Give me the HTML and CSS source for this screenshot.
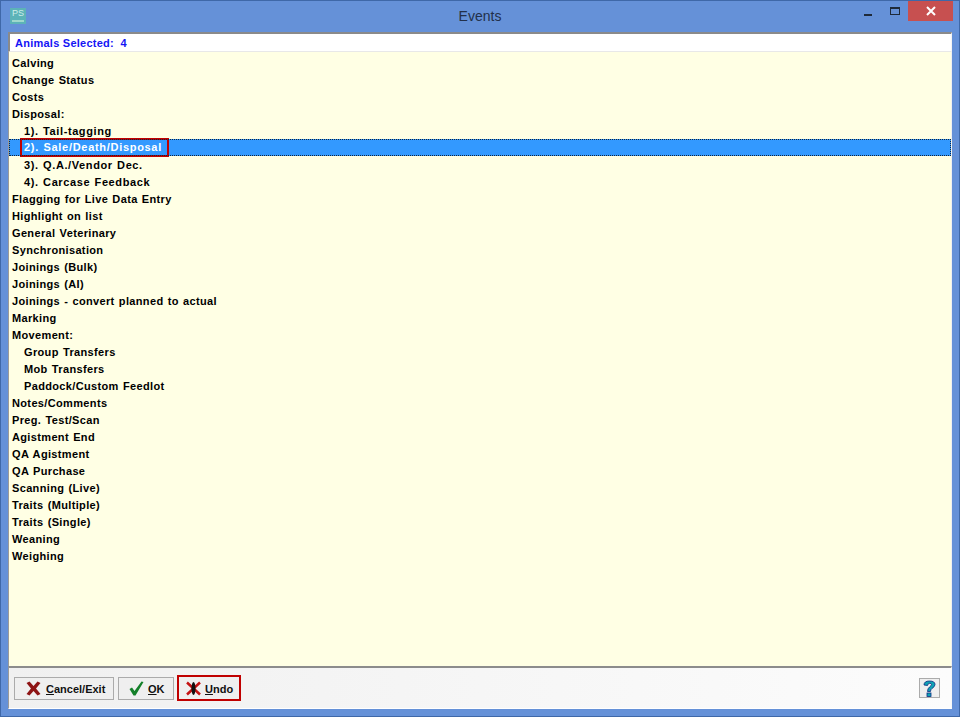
FILE: index.html
```html
<!DOCTYPE html>
<html lang="en">
<head>
<meta charset="utf-8">
<title>Events</title>
<link rel="stylesheet" href="styles.css">
</head>
<body>
<div class="window">
  <header class="titlebar">
    <div class="app-icon"><span class="app-icon-text">PS</span><span class="app-icon-bar"></span></div>
    <div class="title">Events</div>
    <div class="controls">
      <div class="ctl ctl-min"><span class="min-glyph"></span></div>
      <div class="ctl ctl-max"><span class="max-glyph"></span></div>
      <div class="ctl ctl-close">
        <svg width="10" height="10" viewBox="0 0 10 10"><path d="M1 1L9 9M9 1L1 9" stroke="#fff" stroke-width="2" fill="none"/></svg>
      </div>
    </div>
  </header>
  <main class="client">
    <div class="selected-bar"><span>Animals Selected:&nbsp; 4</span></div>
    <ul class="list">
      <li>Calving</li>
      <li>Change Status</li>
      <li>Costs</li>
      <li>Disposal:</li>
      <li class="sub num">1). Tail-tagging</li>
      <li class="sub active"><span class="hl">2). Sale/Death/Disposal</span></li>
      <li class="sub num">3). Q.A./Vendor Dec.</li>
      <li class="sub num">4). Carcase Feedback</li>
      <li>Flagging for Live Data Entry</li>
      <li>Highlight on list</li>
      <li>General Veterinary</li>
      <li>Synchronisation</li>
      <li>Joinings (Bulk)</li>
      <li>Joinings (AI)</li>
      <li>Joinings - convert planned to actual</li>
      <li>Marking</li>
      <li>Movement:</li>
      <li class="sub">Group Transfers</li>
      <li class="sub">Mob Transfers</li>
      <li class="sub">Paddock/Custom Feedlot</li>
      <li>Notes/Comments</li>
      <li>Preg. Test/Scan</li>
      <li>Agistment End</li>
      <li>QA Agistment</li>
      <li>QA Purchase</li>
      <li>Scanning (Live)</li>
      <li>Traits (Multiple)</li>
      <li>Traits (Single)</li>
      <li>Weaning</li>
      <li>Weighing</li>
    </ul>
    <footer class="footer">
      <button class="btn btn-cancel">
        <svg width="15" height="15" viewBox="0 0 15 15"><path d="M0.500 2L3.500 0.500L7.500 5L11.500 0.500L14.500 2L10 7.500L14.500 13L11.500 14.500L7.500 10L3.500 14.500L0.500 13L5 7.500Z" fill="#8e1414"/></svg>
        <span><u>C</u>ancel/Exit</span>
      </button>
      <button class="btn btn-ok">
        <svg width="15" height="15" viewBox="0 0 15 15"><path d="M0.500 8L3 6.500L5.500 10L12.500 0.500L14.500 1L6.500 14.500H4.500Z" fill="#14802a"/></svg>
        <span><u>O</u>K</span>
      </button>
      <button class="btn btn-undo">
        <svg width="15" height="15" viewBox="0 0 15 15"><path d="M1 1.500L14 13.500M14 1.500L1 13.500" stroke="#c41212" stroke-width="2.500" fill="none"/><ellipse cx="7.500" cy="7.500" rx="2" ry="6.500" fill="#111"/></svg>
        <span><u>U</u>ndo</span>
      </button>
      <div class="spacer"></div>
      <button class="btn-help">
        <svg width="13" height="17" viewBox="0 0 13 17"><path d="M1 5Q1 1 6.500 1Q12 1 12 4.500Q12 6.500 9 8.500Q7.500 9.500 7.500 11.500H4.500Q4.500 8.500 6.500 7Q8.500 5.500 8.500 4.500Q8.500 3.300 6.800 3.300Q4.800 3.300 4.500 5.500Z" fill="#0ea3b4" stroke="#0a2a80" stroke-width=".8"/><rect x="4" y="13" width="4" height="3.500" fill="#0ea3b4" stroke="#0a2a80" stroke-width=".8"/></svg>
      </button>
    </footer>
  </main>
</div>
</body>
</html>
```
FILE: styles.css
```css
* { box-sizing: border-box; }
html, body { margin: 0; padding: 0; }
body { width: 960px; height: 717px; overflow: hidden; font-family: "Liberation Sans", Arial, sans-serif; }
.window {
  width: 960px; height: 717px;
  background: #6591d8;
  border: 1px solid #3f68a8;
  display: flex; flex-direction: column;
  padding: 0 7px 7px 7px;
}
.titlebar { height: 31px; flex: none; display: flex; align-items: flex-start; position: relative; }
.app-icon {
  width: 16px; height: 16px; margin: 7px 0 0 2px; background: #5cb3b8;
  display: flex; flex-direction: column; align-items: center; flex: none;
}
.app-icon-text { font-size: 9px; line-height: 11px; color: #cfeee8; }
.app-icon-bar { width: 12px; height: 2px; background: #9ed8cc; margin-top: 1px; }
.title {
  position: absolute; left: 0; right: 0; top: 7px; text-align: center;
  font-size: 14px; line-height: 17px; color: #22304a;
}
.controls { margin-left: auto; display: flex; margin-right: -1px; height: 20px; position: relative; z-index: 1; }
.ctl { display: flex; align-items: center; justify-content: center; flex: none; height: 20px; }
.ctl-min { width: 27px; }
.min-glyph { width: 8px; height: 2px; background: #1e2a3a; margin-top: 7px; }
.ctl-max { width: 27px; }
.max-glyph { width: 10px; height: 8px; border: 1px solid #1e2a3a; border-top-width: 2px; margin-top: 0; }
.ctl-close { width: 45px; background: #c75050; }
.client { flex: 1; display: flex; flex-direction: column; min-height: 0; }
.selected-bar {
  height: 20px; flex: none; background: #fff;
  border: 1px solid; border-color: #8a8a8a #f4f4f4 #e8e8e8 #8a8a8a;
  border-top-width: 2px; border-left-width: 2px;
  padding-left: 5px; display: flex; align-items: center;
  font-size: 11px; font-weight: 700; color: #1414f5; letter-spacing: .25px;
}
.list {
  flex: 1; margin: 0; padding: 2px 0 0 0; list-style: none;
  background: #ffffe4;
  border-left: 1px solid #9a9a9a; border-right: 1px solid #f0f0f0;
  min-height: 0;
}
.list li {
  height: 17px; line-height: 18px; padding-left: 3px;
  font-size: 11px; font-weight: 700; color: #000; letter-spacing: .35px; word-spacing: .8px; white-space: nowrap;
}
.list li.sub { padding-left: 15px; }
.list li.num { letter-spacing: .6px; }
.list li.active {
  background: #3399ff; color: #fff; outline: 1px dotted #10253f; outline-offset: -1px;
  padding-left: 11px; display: flex; align-items: center;
}
.hl {
  display: block; height: 19px; line-height: 15px; padding: 0 6px 0 2px;
  border: 2px solid #c00000; width: 149px; flex: none; letter-spacing: .7px;
}
.footer {
  height: 43px; flex: none; background: linear-gradient(90deg, #f0f0f0, #fcfcfc);
  border-top: 2px solid #8c8c8c; border-left: 1px solid #9a9a9a; border-right: 1px solid #f8f8f8; border-bottom: 1px solid #fff;
  display: flex; align-items: center; padding: 0 11px 0 5px; gap: 4px;
}
.btn {
  height: 23px; background: #efefef; border: 1px solid #ababab; padding: 2px 0 0 0; margin: 0;
  display: flex; align-items: center; justify-content: flex-start; gap: 5px;
  font-family: "Liberation Sans", Arial, sans-serif; font-size: 11px; font-weight: 700; color: #111;
}
.btn svg { margin-top: -2px; flex: none; }
.btn-cancel { width: 100px; padding-left: 11px; }
.btn-ok { width: 56px; padding-left: 10px; gap: 4px; }
.btn-undo { width: 64px; height: 26px; border: 2px solid #c00000; margin-left: -1px; padding-left: 7px; gap: 4px; }
.spacer { flex: 1; }
.btn-help { width: 21px; height: 20px; border: 1px solid #ababab; background: #efefef; padding: 0; display: flex; align-items: center; justify-content: center; }
```
